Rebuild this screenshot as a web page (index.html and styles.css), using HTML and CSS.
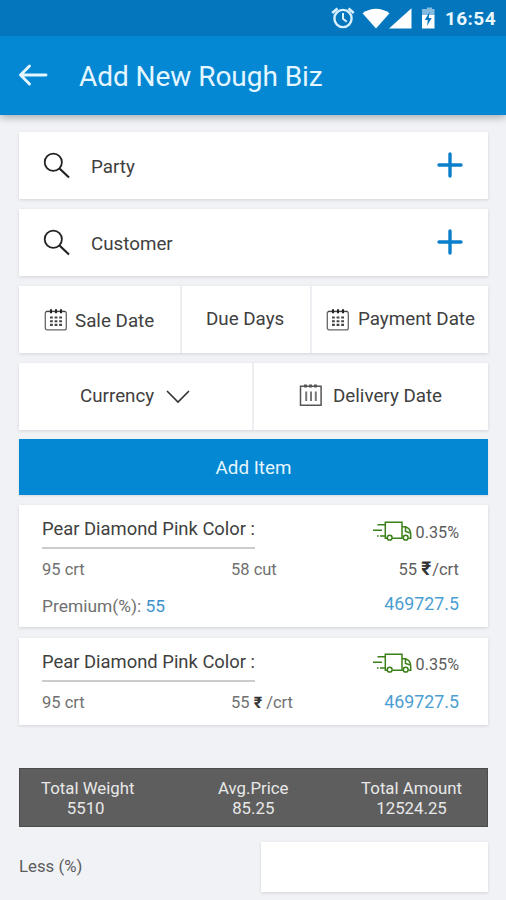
FILE: index.html
```html
<!DOCTYPE html>
<html lang="en">
<head>
<meta charset="utf-8">
<title>Add New Rough Biz</title>
<link rel="stylesheet" href="styles.css">
</head>
<body>
<svg class="defs" width="0" height="0">
  <defs>
    <symbol id="search" viewBox="0 0 28 28"><circle cx="10.3" cy="10.3" r="8.6" fill="none" stroke="#222" stroke-width="1.8"/><path d="M16.5 16.5 26 25.5" stroke="#222" stroke-width="2.2"/></symbol>
    <symbol id="plus" viewBox="0 0 26 26"><path d="M13 2v22M2 13h22" stroke="#0c7fcb" stroke-width="3.4" stroke-linecap="round"/></symbol>
    <symbol id="calendar" viewBox="0 0 24 24"><rect x="1.3" y="3.3" width="21" height="18.6" rx="2" fill="none" stroke="#666" stroke-width="1.3"/><path d="M2 3.5h19.500" stroke="#444" stroke-width="1.300"/><path d="M7 1.200v4M12 1.200v4M17 1.200v4" stroke="#222" stroke-width="2"/><path d="M6 9.500h12M6 13.200h12M6 16.900h12" stroke="#444" stroke-width="2.100" stroke-dasharray="2.800 1.800"/></symbol>
    <symbol id="calendar-bars" viewBox="0 0 24 24"><path d="M1.500 3.300h20.600v19H1.500z" fill="none" stroke="#555" stroke-width="1.500"/><path d="M5 3h13.500" stroke="#555" stroke-width="3.200" stroke-dasharray="3 2"/><path d="M7.200 8.500v9.500M12 8.500v9.500M16.800 8.500v9.500" stroke="#777" stroke-width="2"/></symbol>
    <symbol id="truck" viewBox="0 0 40 21"><g fill="none" stroke="#3b8018" stroke-width="1.500"><path d="M15.300 17.300h-2V1.300H30v16H20.500M30 5.700h3.500c3.300 1 5.100 4.300 5.200 7.400v4.200h-2M33.500 6v4.500l5 1.500"/><path d="M5.500 3.700h8M1 9.300h9M5 15h1.600M8 15h5"/><circle cx="17.700" cy="16.700" r="2.400"/><circle cx="33.700" cy="16.700" r="2.400"/></g></symbol>
  </defs>
</svg>

<header>
  <div class="status">
    <svg width="106" height="24" viewBox="0 0 106 24">
      <g fill="none" stroke="#d9f0ff"><circle cx="13" cy="12.500" r="8.600" stroke-width="2.400"/><path d="M13 7v5.700l3.700 3" stroke-width="2"/><path d="M2.200 7 7.500 2.500M23.800 7 18.500 2.500" stroke-width="2.600"/></g>
      <path d="M32.500 7.300c8-6 19-6 27 0L46 22.500z" fill="#fff"/>
      <path d="M81.500 2.300v20.200H59z" fill="#fff"/>
      <path d="M94 3h3V1.500h5V3h2.500v8H92V3z" fill="#84b9e0"/><path d="M92 9h12.500v13.500H92z" fill="#fff"/><path d="M99.500 6 94.800 14h3l-.8 6 4.700-8h-3z" fill="#0876bf"/>
    </svg>
    <span class="clock">16:54</span>
  </div>
  <div class="appbar">
    <svg class="back" width="30" height="24" viewBox="0 0 30 24"><path d="M11.500 3 2.500 12l9 9M2.500 12H28" fill="none" stroke="#e4f6ff" stroke-width="2.900" stroke-linecap="round" stroke-linejoin="round"/></svg>
    <h1>Add New Rough Biz</h1>
  </div>
</header>

<main>
  <section class="card search-row">
    <svg width="28" height="28"><use href="#search"/></svg><span>Party</span><svg class="plus" width="26" height="26"><use href="#plus"/></svg>
  </section>
  <section class="card search-row">
    <svg width="28" height="28"><use href="#search"/></svg><span>Customer</span><svg class="plus" width="26" height="26"><use href="#plus"/></svg>
  </section>
  <section class="card fields three">
    <div class="field sale"><svg width="24" height="24"><use href="#calendar"/></svg><span>Sale Date</span></div>
    <div class="field due"><span>Due Days</span></div>
    <div class="field payment"><svg width="24" height="24"><use href="#calendar"/></svg><span>Payment Date</span></div>
  </section>
  <section class="card fields two">
    <div class="field currency"><span>Currency</span><svg width="26" height="16" viewBox="0 0 26 16"><path d="M2 2 13 13 24 2" fill="none" stroke="#333" stroke-width="1.600"/></svg></div>
    <div class="field delivery"><svg width="24" height="24"><use href="#calendar-bars"/></svg><span>Delivery Date</span></div>
  </section>
  <button class="add">Add Item</button>

  <section class="card item first">
    <div class="item-head"><h2>Pear Diamond Pink Color :</h2><div class="ship"><svg width="40" height="21"><use href="#truck"/></svg><span>0.35%</span></div></div>
    <div class="specs"><span>95 crt</span><span>58 cut</span><span class="end">55 <b>₹</b>/crt</span></div>
    <div class="premium"><span>Premium(%): <em>55</em></span><span class="amount">469727.5</span></div>
  </section>
  <section class="card item second">
    <div class="item-head"><h2>Pear Diamond Pink Color :</h2><div class="ship"><svg width="40" height="21"><use href="#truck"/></svg><span>0.35%</span></div></div>
    <div class="specs"><span>95 crt</span><span>55 <b>₹</b> /crt</span><span class="amount">469727.5</span></div>
  </section>

  <section class="totals">
    <div class="weight">Total Weight<br><span>5510</span></div>
    <div class="average">Avg.Price<br>85.25</div>
    <div class="sum">Total Amount<br>12524.25</div>
  </section>
  <label class="less"><span>Less (%)</span><input class="card" type="text"></label>
</main>
</body>
</html>
```
FILE: styles.css
```css
* { box-sizing: border-box; }
body { margin: 0; height: 900px; overflow: hidden; background: #f0f2f6; color: #404040; font-family: Roboto, "Noto Sans", sans-serif; font-size: 18.8px; }
svg { display: block; flex: none; }
.defs { position: absolute; }
span { white-space: nowrap; }
header { background: #0488d3; box-shadow: 0 2px 8px rgba(0,0,0,.32); }
.status { height: 36px; background: #0376bd; display: flex; align-items: center; justify-content: flex-end; padding: 0 10px 0 0; color: #e9f7ff; }
.clock { font-size: 19px; font-weight: 700; width: 51px; margin-left: 9px; line-height: 36px; padding-top: 2px; letter-spacing: .4px; }
.appbar { height: 79px; display: flex; align-items: center; padding-left: 18px; }
.back { margin-top: -1px; }
h1 { margin: 3px 0 0 31px; font-size: 28px; font-weight: 400; line-height: 36px; color: #e4f6ff; letter-spacing: -.05px; white-space: nowrap; }
main { padding: 17px 18px 0 19px; }
.card { background: #fff; box-shadow: 0 1px 3px rgba(0,0,0,.13); }
.search-row { height: 67px; margin-bottom: 10px; padding: 0 25px 0 24px; display: flex; align-items: center; }
.search-row span { margin: 2px 0 0 20px; }
.search-row .plus { margin: -2px 0 0 auto; }
.fields { height: 67px; margin-bottom: 10px; display: grid; }
.three { grid-template-columns: 161px 130px 1fr; }
.two { grid-template-columns: 233px 1fr; }
.field { display: flex; align-items: center; }
.field + .field { border-left: 2px solid #eceef1; }
.sale { padding-left: 25px; }
.sale svg { margin-top: 1px; }
.sale span { margin: 2px 0 0 7px; }
.due { padding-left: 24px; }
.due span { margin-top: -1px; }
.payment { padding-left: 14px; }
.payment span { margin: -1px 0 0 8px; }
.currency { padding-left: 61px; }
.currency span { margin-top: -2px; }
.currency svg { margin: 0 0 0 11px; }
.delivery { padding-left: 45px; }
.delivery svg { margin-top: -4px; }
.delivery span { margin: -2px 0 0 10px; }
.add { display: block; width: 100%; height: 56px; margin: -1px 0 10px; border: 0; background: #0488d3; color: #e4f6ff; font: 400 18.8px/54px Roboto, sans-serif; padding: 2px 0 0; box-shadow: 0 1px 2px rgba(0,0,0,.1); }
.item { padding: 0 29px 0 23px; font-size: 16.5px; color: #707070; }
.first { height: 122px; margin-bottom: 11px; }
.second { height: 87px; margin-bottom: 43px; }
.item-head { display: flex; justify-content: space-between; height: 44px; }
h2 { margin: 0; width: 213px; font-size: 18.4px; line-height: 48px; font-weight: 400; color: #404040; border-bottom: 2px solid #ccc; white-space: nowrap; }
.ship { display: flex; align-items: flex-start; padding-top: 16px; color: #5c5c5c; }
.second .ship { padding-top: 15px; }
.ship svg { margin-right: 4px; }
.ship span { line-height: 24px; font-size: 16.2px; }
.specs { display: grid; grid-template-columns: 189px 80px 1fr; line-height: 41px; height: 37px; }
.end, .amount { text-align: right; }
.end { color: #606060; }
.end b { font-size: 19px; margin-right: 1px; }
b { color: #333; font-size: 16px; line-height: 1; }
em { font-style: normal; color: #3c91cc; }
.amount { color: #4b9ed2; font-size: 17.8px; }
.specs .amount { line-height: 39px; }
.premium { display: flex; justify-content: space-between; line-height: 41px; font-size: 17.4px; }
.premium .amount { line-height: 35px; font-size: 17.8px; }
.totals { height: 59px; margin-bottom: 15px; display: flex; justify-content: space-between; padding: 9px 25px 0 21px; background: #5e5e5e; border: 1px solid #4b4b4b; color: #e8e8e8; font-size: 16.8px; line-height: 20px; text-align: center; white-space: nowrap; }
.average { padding: 0 0 0 11px; }
.weight span { margin-right: 4px; }
.less { display: flex; justify-content: space-between; line-height: 48px; font-size: 16.8px; color: #5c5c5c; }
.less input { width: 227px; height: 50px; border: 0; }
```
